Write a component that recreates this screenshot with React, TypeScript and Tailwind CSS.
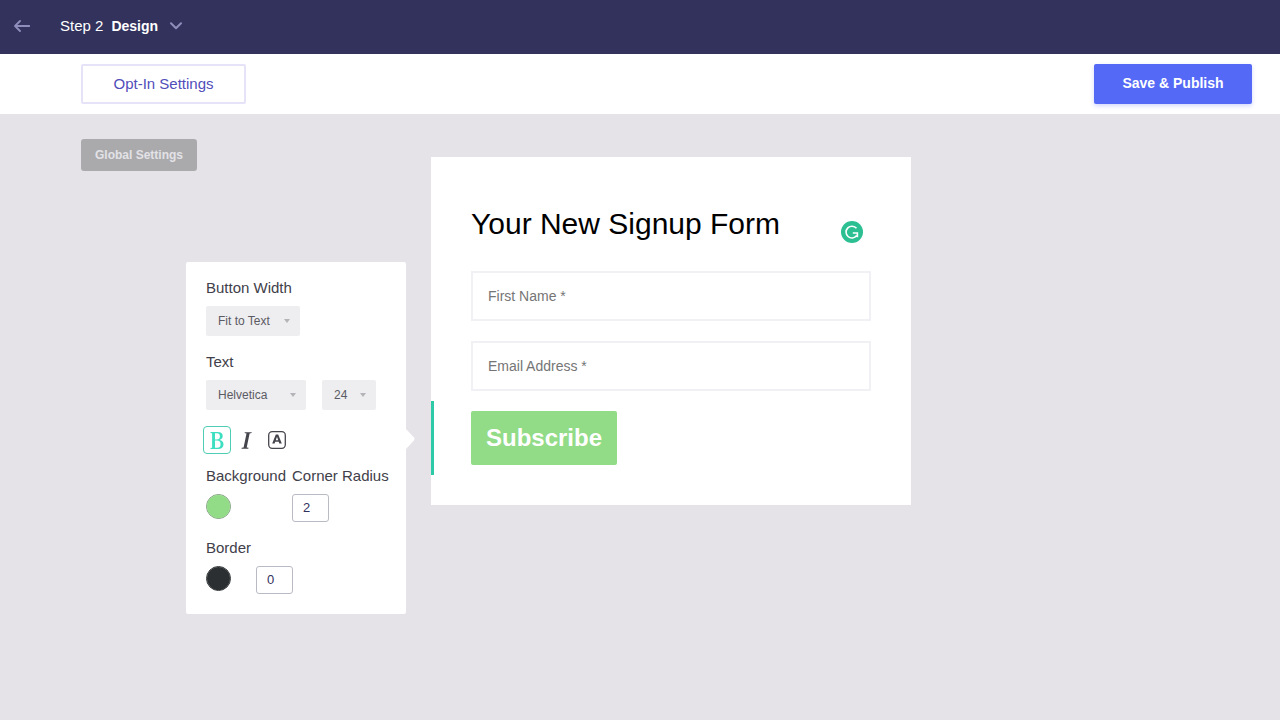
import { useState } from "react";
import type { ReactNode, SelectHTMLAttributes } from "react";

type SelectProps = SelectHTMLAttributes<HTMLSelectElement> & { width: string };

function Select({ width, children, ...rest }: SelectProps) {
  return (
    <div className={`relative h-[30px] ${width}`}>
      <select
        {...rest}
        className="h-full w-full appearance-none rounded-[2px] bg-[#eeedf0] pl-3 text-xs leading-5 text-[#5b5b63] outline-none"
      >
        {children}
      </select>
      <svg
        aria-hidden="true"
        viewBox="0 0 6 4"
        className="pointer-events-none absolute top-[13px] right-[10px] h-1 w-1.5 fill-[#b4b4b8]"
      >
        <path d="M0 0h6L3 4z" />
      </svg>
    </div>
  );
}

function Field({ id, label, children }: { id: string; label: string; children: ReactNode }) {
  return (
    <div className="flex flex-col items-start gap-2">
      <label htmlFor={id} className="text-[15px] leading-5 whitespace-nowrap text-[#41404a]">
        {label}
      </label>
      {children}
    </div>
  );
}

function NumberBox({ id, label, initial }: { id: string; label?: string; initial: string }) {
  const [value, setValue] = useState(initial);
  return (
    <input
      id={id}
      aria-label={label}
      type="text"
      inputMode="numeric"
      value={value}
      onChange={(e) => setValue(e.target.value)}
      className="h-7 w-[37px] rounded-[3px] border border-[#b9bac4] bg-white pb-0.5 pl-[10px] text-[13px] text-[#32325d] outline-none"
    />
  );
}

function Swatch({ id, initial, edge }: { id: string; initial: string; edge: string }) {
  const [value, setValue] = useState(initial);
  return (
    <input
      id={id}
      type="color"
      value={value}
      onChange={(e) => setValue(e.target.value)}
      className={`size-[25px] appearance-none overflow-hidden rounded-full border p-0 [&::-webkit-color-swatch]:border-0 [&::-webkit-color-swatch-wrapper]:p-0 ${edge}`}
    />
  );
}

function TextField({ label, type }: { label: string; type: string }) {
  return (
    <input
      type={type}
      aria-label={label}
      placeholder={`${label} *`}
      className="block h-[50px] w-full border-2 border-[#f1f0f4] bg-white px-[15px] text-sm text-[#333333] outline-none placeholder:text-[#757575]"
    />
  );
}

function Header() {
  return (
    <header className="flex h-[54px] items-center bg-[#32325d] pb-0.5 pl-3.5 text-white">
      <button type="button" aria-label="Back" className="mr-[30px]">
        <svg viewBox="0 0 16 12" className="h-3 w-4 fill-none stroke-[#8f8dbb] stroke-[1.8]">
          <path d="M6 1 1 6l5 5M1 6h14.5" strokeLinecap="round" strokeLinejoin="round" />
        </svg>
      </button>
      <button type="button" className="flex items-center text-[15px] leading-5">
        <span>Step 2</span>
        <span className="ml-2 text-sm leading-5 font-bold">Design</span>
        <svg viewBox="0 0 12 8" className="ml-3 h-2 w-3 fill-none stroke-[#8f8dbb] stroke-2">
          <path d="m1 1.2 5 5 5-5" strokeLinecap="round" strokeLinejoin="round" />
        </svg>
      </button>
    </header>
  );
}

function Toolbar() {
  return (
    <div className="flex h-[60px] items-center justify-between bg-white pr-7 pl-[81px]">
      <button
        type="button"
        className="h-10 w-[165px] rounded-[2px] border-2 border-[#e6e3f8] text-[15px] text-[#514dba]"
      >
        Opt-In Settings
      </button>
      <button
        type="button"
        className="h-10 w-[158px] rounded-[2px] bg-[#5469f6] pb-0.5 text-sm font-bold text-white shadow-[0_2px_4px_rgba(84,105,246,0.25)]"
      >
        Save &amp; Publish
      </button>
    </div>
  );
}

function StylePanel() {
  const [bold, setBold] = useState(true);
  return (
    <section
      aria-label="Button style"
      className="relative flex w-[220px] flex-col gap-4 rounded-[2px] bg-white px-5 pt-4 pb-5"
    >
      <svg
        aria-hidden="true"
        viewBox="0 0 9 20"
        className="absolute top-[167px] left-full h-5 w-[9px] fill-white"
      >
        <path d="M0 0 8 8.5q1 1.5 0 3L0 20z" />
      </svg>
      <Field id="button-width" label="Button Width">
        <Select id="button-width" width="w-[94px]">
          <option>Fit to Text</option>
          <option>Full Width</option>
        </Select>
      </Field>
      <Field id="font-family" label="Text">
        <div className="flex gap-4">
          <Select id="font-family" width="w-[100px]">
            <option>Helvetica</option>
            <option>Georgia</option>
          </Select>
          <Select aria-label="Text size" width="w-[54px]" defaultValue="24">
            <option>18</option>
            <option>24</option>
          </Select>
        </div>
      </Field>
      <div className="-mb-1 -ml-[3px] flex h-7 items-center">
        <button
          type="button"
          aria-label="Bold"
          aria-pressed={bold}
          onClick={() => setBold(!bold)}
          className={`flex size-7 items-center justify-center rounded-[4px] border ${
            bold ? "border-[#4fcdb5] text-[#3ddfc0]" : "border-transparent text-[#45454d]"
          }`}
        >
          <svg viewBox="0 0 14 17" className="h-[17px] w-3.5 fill-current" fillRule="evenodd">
            <path d="M.5 0h7.2C11 0 12.700 1.500 12.700 4c0 2-1.100 3.400-3.200 3.900 2.600.4 4 1.900 4 4.300C13.500 15.300 11.500 17 8 17H.5v-.9l1.600-.4V1.300L.5.900zM5 1.200v6.200h1.800C8.900 7.400 9.900 6.300 9.900 4.200 9.900 2.100 9 1.200 7 1.200zM5 8.600v7.200h2.200c2.300 0 3.400-1.200 3.400-3.600S9.400 8.600 7.100 8.600z" />
          </svg>
        </button>
        <button type="button" aria-label="Italic" className="ml-2.5 text-[#45454d]">
          <svg viewBox="0 0 11 17" className="h-[17px] w-[11px] fill-current">
            <path d="M3.800.2h7l-.2.9-2 .4-2.900 13.900 1.800.4-.2.900H.5l.2-.9 1.900-.4L5.500 1.500 3.600 1.100z" />
          </svg>
        </button>
        <button type="button" aria-label="Text color" className="ml-4 text-[#45454d]">
          <svg viewBox="0 0 18 18" className="size-[18px]">
            <rect
              x="0.7"
              y="0.7"
              width="16.6"
              height="16.6"
              rx="3.5"
              fill="none"
              stroke="currentColor"
              strokeWidth="1.3"
            />
            <path
              d="M7.800 3.500h2.400l3.600 9h-2.500l-.6-1.700H7.200L6.600 12.500H4.200zM9 5.700 7.800 9.200h2.400z"
              fill="currentColor"
              fillRule="evenodd"
            />
          </svg>
        </button>
      </div>
      <div className="flex">
        <div className="w-[86px] shrink-0">
          <Field id="background" label="Background">
            <Swatch id="background" initial="#92db87" edge="border-[#7a9d79] bg-[#92db87]" />
          </Field>
        </div>
        <Field id="corner-radius" label="Corner Radius">
          <NumberBox id="corner-radius" initial="2" />
        </Field>
      </div>
      <Field id="border-color" label="Border">
        <div className="flex gap-[25px]">
          <Swatch id="border-color" initial="#2b2f31" edge="border-[#2b2f31] bg-[#2b2f31]" />
          <NumberBox id="border-width" label="Border width" initial="0" />
        </div>
      </Field>
    </section>
  );
}

function SignupForm() {
  return (
    <form
      onSubmit={(e) => e.preventDefault()}
      className="mt-[43px] flex w-[480px] shrink-0 flex-col gap-5 bg-white p-10"
    >
      <div className="flex h-[54px] items-end justify-between pr-2 pb-2">
        <h1 className="text-3xl leading-[38px] text-black">Your New Signup Form</h1>
        <svg aria-hidden="true" viewBox="0 0 22 22" className="size-[22px]">
          <circle cx="11" cy="11" r="11" fill="#2bbf92" />
          <path
            d="M15.500 7.300A5.900 5.900 0 1 0 15.700 14.600M11.800 12h4.600v4.200"
            fill="none"
            stroke="white"
            strokeWidth="1.6"
          />
        </svg>
      </div>
      <TextField label="First Name" type="text" />
      <TextField label="Email Address" type="email" />
      <div className="-mx-10 -my-2.5 border-l-[3px] border-[#2ec9a7] py-2.5 pl-[37px]">
        <button
          type="submit"
          className="block h-[54px] w-[146px] rounded-[2px] bg-[#92db87] text-2xl font-bold text-white"
        >
          Subscribe
        </button>
      </div>
    </form>
  );
}

export default function App() {
  return (
    <div className="flex min-h-screen flex-col bg-[#e5e3e8] font-['Liberation_Sans',Arial,sans-serif]">
      <Header />
      <Toolbar />
      <main className="flex flex-1 items-start gap-[25px] pb-10 pl-[81px]">
        <div className="flex w-[325px] shrink-0 flex-col pt-[25px]">
          <button
            type="button"
            className="h-8 w-[116px] self-start rounded-[3px] bg-[#aaaaad] text-xs font-bold text-[#e3e2e6]"
          >
            Global Settings
          </button>
          <div className="mt-[91px] self-end">
            <StylePanel />
          </div>
        </div>
        <SignupForm />
      </main>
    </div>
  );
}
